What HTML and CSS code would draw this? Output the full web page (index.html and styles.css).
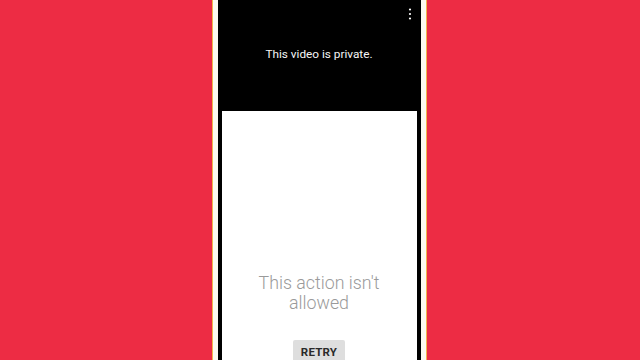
FILE: index.html
```html
<!DOCTYPE html>
<html lang="en">
<head>
  <meta charset="UTF-8">
  <meta name="viewport" content="width=device-width, initial-scale=1.0">
  <title>This video is private</title>
  <link rel="stylesheet" href="styles.css">
</head>

<body>
  <div class="phone">
    <div class="screen">
      <!-- Player -->
      <div class="player">
        <svg class="menu-icon" viewBox="0 0 4 12">
          <circle cx="2" cy="1.5" r="1.1"></circle>
          <circle cx="2" cy="6" r="1.1"></circle>
          <circle cx="2" cy="10.5" r="1.1"></circle>
        </svg>
        <div class="player-message">This video is private.</div>
      </div>

      <!-- Error panel -->
      <div class="panel">
        <div class="panel-message">This action isn't allowed</div>
        <button class="retry-button">RETRY</button>
      </div>
    </div>
  </div>
</body>
</html>
```

FILE: styles.css
```css
* {
  margin: 0;
  padding: 0;
  box-sizing: border-box;
}

html, body {
  height: 100%;
}

body {
  background: #ed2c44;
  font-family: Roboto, 'Noto Sans', sans-serif;
  display: flex;
  justify-content: center;
  overflow: hidden;
}

.phone {
  width: 215px;
  height: 100%;
  margin-right: 2px;
  padding: 0 5px;
  background: #fdf9ef;
  border-left: 1px solid #f2b34a;
  border-right: 1px solid #f2b34a;
}

.screen {
  height: 100%;
  background: #000;
  display: flex;
  flex-direction: column;
  overflow: hidden;
}

.player {
  flex-shrink: 0;
  height: 111px;
  position: relative;
  display: flex;
  align-items: center;
  justify-content: center;
  padding-bottom: 3px;
}

.player-message {
  color: #f5f5f5;
  font-size: 11.8px;
}

.menu-icon {
  position: absolute;
  top: 8px;
  right: 9px;
  width: 4px;
  height: 12px;
  fill: #fff;
}

.panel {
  flex-shrink: 0;
  height: 260px;
  margin: 0 4px;
  background: #fff;
  display: flex;
  flex-direction: column;
  align-items: center;
  padding-top: 162px;
}

.panel-message {
  width: 150px;
  color: #9a9a9a;
  font-size: 17.8px;
  font-weight: 300;
  line-height: 20px;
  text-align: center;
}

.retry-button {
  margin-top: 27px;
  padding: 0 8px;
  height: 24px;
  border: none;
  border-radius: 2px;
  background: #dedede;
  color: #2a2a2a;
  font-family: Roboto, 'Noto Sans', sans-serif;
  font-size: 11.5px;
  font-weight: 700;
  letter-spacing: 0.2px;
}
```
